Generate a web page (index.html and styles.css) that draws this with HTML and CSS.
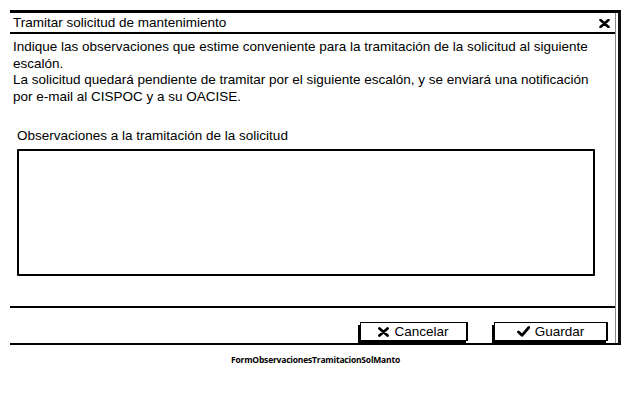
FILE: index.html
```html
<!DOCTYPE html>
<html lang="es">
<head>
<meta charset="utf-8">
<title>Tramitar solicitud de mantenimiento</title>
<link rel="stylesheet" href="styles.css">
</head>
<body>
<div class="window">
  <div class="frame">
    <div class="titlebar">
      <span class="title">Tramitar solicitud de mantenimiento</span>
      <svg class="close" width="11" height="9" viewBox="0 0 11 9"><path d="M1.5 1 L9.5 8 M9.5 1 L1.5 8" stroke="#000" stroke-width="2.6" stroke-linecap="round"/></svg>
    </div>
    <div class="content">
      <p class="intro">Indique las observaciones que estime conveniente para la tramitación de la solicitud al siguiente<br>escalón.<br>La solicitud quedará pendiente de tramitar por el siguiente escalón, y se enviará una notificación<br>por e-mail al CISPOC y a su OACISE.</p>
      <div class="field">
        <div class="label">Observaciones a la tramitación de la solicitud</div>
        <div class="textarea"></div>
      </div>
    </div>
    <div class="actions">
      <button class="btn btn-cancel"><svg width="11" height="10" viewBox="0 0 11 10"><path d="M1.5 1.5 L9.5 8.5 M9.5 1.5 L1.5 8.5" stroke="#000" stroke-width="2.8" stroke-linecap="round"/></svg><span>Cancelar</span></button>
      <button class="btn btn-save"><svg width="13" height="11" viewBox="0 0 13 11"><path d="M1.5 6 L5 9.3 L11.8 1.5" fill="none" stroke="#000" stroke-width="2.8" stroke-linecap="round" stroke-linejoin="round"/></svg><span>Guardar</span></button>
    </div>
  </div>
</div>
<div class="caption">FormObservacionesTramitacionSolManto</div>
</body>
</html>
```
FILE: styles.css
```css
html, body {
  margin: 0;
  padding: 0;
  background: #fff;
}
body {
  font-family: "Liberation Sans", Arial, sans-serif;
  color: #000;
}
.window {
  margin: 10px 0 0 10px;
  width: 611px;
  box-sizing: border-box;
  border-top: 3px solid #000;
  border-bottom: 2px solid #000;
  border-right: 3px solid #111;
  padding-right: 2px;
}
.frame {
  border-right: 1px solid #8a8a8a;
}
.titlebar {
  height: 19px;
  border-bottom: 2px solid #000;
  display: flex;
  align-items: center;
  justify-content: space-between;
  padding: 0 5px 0 3px;
}
.title {
  font-size: 13.5px;
  line-height: 16px;
}
.close {
  display: block;
  margin-top: 1px;
}
.content {
  padding: 5px 10px 30px 3px;
}
.intro {
  margin: 0;
  font-size: 13.5px;
  line-height: 16.5px;
  white-space: nowrap;
}
.field {
  margin-top: 23px;
  padding-left: 4px;
  padding-right: 10px;
}
.label {
  font-size: 13.5px;
  line-height: 16px;
}
.textarea {
  margin-top: 5px;
  height: 127px;
  box-sizing: border-box;
  border: 2.5px solid #000;
  border-radius: 1px;
  background: #fff;
}
.actions {
  border-top: 2px solid #000;
  height: 37px;
  box-sizing: border-box;
  display: flex;
  justify-content: flex-end;
  align-items: flex-start;
  gap: 26px;
  padding: 14px 7px 0 0;
}
.btn {
  height: 19px;
  box-sizing: border-box;
  border: 1.5px solid #000;
  border-right-width: 2.5px;
  background: #fff;
  box-shadow: -2px 3px 0 #000;
  display: flex;
  align-items: center;
  justify-content: center;
  gap: 5px;
  font-family: "Liberation Sans", Arial, sans-serif;
  font-size: 13.5px;
  color: #000;
  padding: 0;
}
.btn svg {
  display: block;
}
.btn-cancel {
  width: 108px;
}
.btn-save {
  width: 114px;
}
.caption {
  margin-top: 9px;
  text-align: center;
  font-family: "Open Sans", sans-serif;
  font-weight: 700;
  font-size: 8.5px;
  letter-spacing: -0.2px;
  color: #000;
}
```
